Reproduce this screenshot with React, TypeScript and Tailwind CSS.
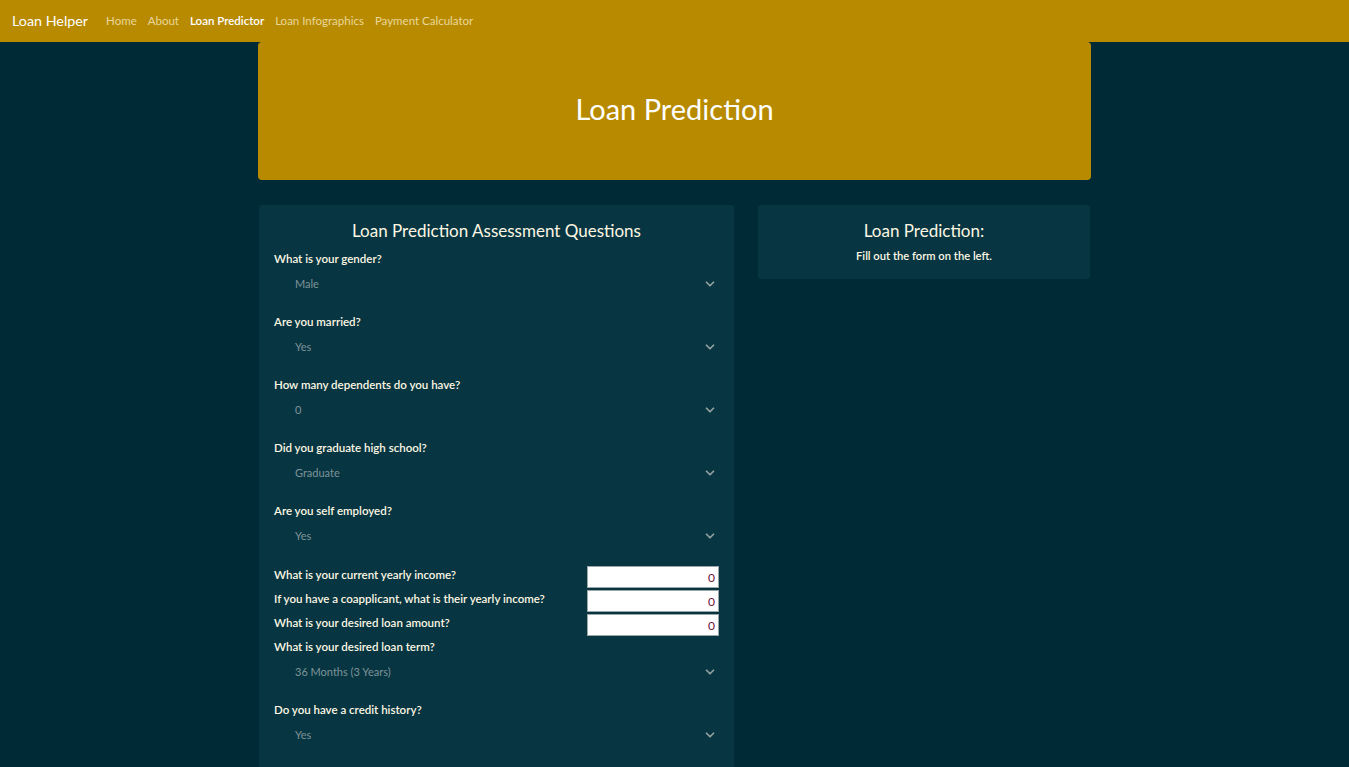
import { ChevronDown } from "lucide-react";

const font = { fontFamily: "Lato, 'Liberation Sans', sans-serif" };

function Select({ label, value }: { label: string; value: string }) {
  return (
    <div className="mb-[11px]">
      <p className="h-[18px] leading-[18px] pt-[1px] text-[11.5px] font-semibold text-[#fdf6e3]">{label}</p>
      <div className="h-[34px] flex items-center justify-between pl-[21px] pr-[2px]">
        <span className="text-[11px] text-[#7f9399]">{value}</span>
        <ChevronDown className="w-[14px] h-[14px] text-[#93a1a1]" strokeWidth={3} />
      </div>
    </div>
  );
}

function NumberRow({ label }: { label: string }) {
  return (
    <div className="h-[24px] flex justify-between items-start">
      <p className="pt-[2px] leading-[18px] text-[11.5px] font-semibold text-[#fdf6e3]">{label}</p>
      <input
        readOnly
        value="0"
        className="mt-[2px] w-[132px] h-[22px] bg-white border border-[#9aa5a8] text-right pr-[3px] text-[12px] text-[#6b1235]"
      />
    </div>
  );
}

export default function App() {
  return (
    <main className="min-h-screen bg-[#002b36]" style={font}>
      {/* Navbar */}
      <nav className="h-[42px] bg-[#b78a00] flex items-center px-[12px]">
        <span className="text-[14.3px] text-white mr-[18px]">Loan Helper</span>
        <div className="flex gap-[11px] text-[11.5px] text-[#ead79a]">
          <span>Home</span>
          <span>About</span>
          <span className="text-white font-semibold">Loan Predictor</span>
          <span>Loan Infographics</span>
          <span>Payment Calculator</span>
        </div>
      </nav>

      <div className="w-[833px] mx-auto">
        {/* Header */}
        <div className="h-[138px] bg-[#b78a00] rounded-[4px] flex items-center justify-center">
          <h1 className="text-[29px] text-white -mt-[4px]">Loan Prediction</h1>
        </div>

        <div className="flex gap-[24px] px-[1px] mt-[25px] items-start">
          {/* Form */}
          <div className="w-[475px] bg-[#073642] rounded-[3px] pt-[14px] px-[15px] pb-[20px]">
            <h2 className="h-[24px] leading-[24px] text-[17px] text-[#fdf6e3] text-center mb-[6px]">
              Loan Prediction Assessment Questions
            </h2>
            <Select label="What is your gender?" value="Male" />
            <Select label="Are you married?" value="Yes" />
            <Select label="How many dependents do you have?" value="0" />
            <Select label="Did you graduate high school?" value="Graduate" />
            <Select label="Are you self employed?" value="Yes" />
            <NumberRow label="What is your current yearly income?" />
            <NumberRow label="If you have a coapplicant, what is their yearly income?" />
            <NumberRow label="What is your desired loan amount?" />
            <div className="h-[1px]" />
            <Select label="What is your desired loan term?" value="36 Months (3 Years)" />
            <Select label="Do you have a credit history?" value="Yes" />
          </div>

          {/* Result */}
          <div className="w-[332px] h-[74px] bg-[#073642] rounded-[3px] pt-[14px] text-center text-[#fdf6e3]">
            <h2 className="h-[24px] leading-[24px] text-[17px]">Loan Prediction:</h2>
            <p className="mt-[5px] text-[11.2px] font-semibold">Fill out the form on the left.</p>
          </div>
        </div>
      </div>
    </main>
  );
}
